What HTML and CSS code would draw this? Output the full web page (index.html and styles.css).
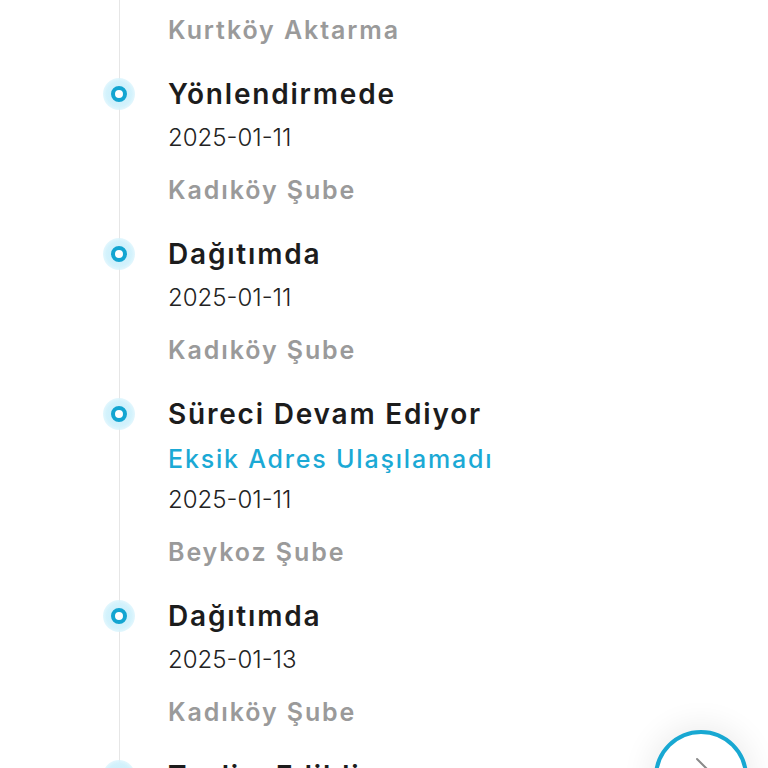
FILE: index.html
```html
<!DOCTYPE html>
<html>
<head>
  <title>Gönderi Hareketleri</title>
  <link rel="stylesheet" href="styles.css">
</head>
<body>
  <div class="timeline">
    <div class="event event-partial">
      <div class="branch">Kurtköy Aktarma</div>
    </div>

    <div class="event">
      <span class="dot"></span>
      <div class="title">Yönlendirmede</div>
      <div class="date">2025-01-11</div>
      <div class="branch">Kadıköy Şube</div>
    </div>

    <div class="event">
      <span class="dot"></span>
      <div class="title">Dağıtımda</div>
      <div class="date">2025-01-11</div>
      <div class="branch">Kadıköy Şube</div>
    </div>

    <div class="event">
      <span class="dot"></span>
      <div class="title">Süreci Devam Ediyor</div>
      <div class="note">Eksik Adres Ulaşılamadı</div>
      <div class="date">2025-01-11</div>
      <div class="branch">Beykoz Şube</div>
    </div>

    <div class="event">
      <span class="dot"></span>
      <div class="title">Dağıtımda</div>
      <div class="date">2025-01-13</div>
      <div class="branch">Kadıköy Şube</div>
    </div>

    <div class="event">
      <span class="dot"></span>
      <div class="title">Teslim Edildi</div>
      <div class="date">2025-01-14</div>
      <div class="branch">Kadıköy Şube</div>
    </div>
  </div>

  <button class="next-button" aria-label="Sonraki">
    <svg width="30" height="30" viewBox="0 0 30 30">
      <path d="M10 5 L20 15 L10 25" fill="none" stroke="#8a8a8a" stroke-width="2" stroke-linecap="round" stroke-linejoin="round"/>
    </svg>
  </button>
</body>
</html>
```

FILE: styles.css
```css
html, body {
  height: 100%;
  overflow: hidden;
}

body {
  margin: 0;
  background: #fff;
  font-family: Inter, "Open Sans", sans-serif;
  color: #1e1e1e;
}

.timeline {
  position: relative;
  padding: 2px 0 0 168px;
}

/* vertical line behind the dots */
.timeline::before {
  content: "";
  position: absolute;
  left: 119px;
  top: 0;
  bottom: 0;
  width: 1px;
  background: #e6e6e6;
}

.event {
  position: relative;
  margin-bottom: 16px;
}

.dot {
  position: absolute;
  left: -65px;
  top: 4px;
  width: 32px;
  height: 32px;
  border-radius: 50%;
  background: radial-gradient(circle, #c9eefb 0%, #d3f2fc 55%, rgba(220, 245, 253, 0.6) 78%, rgba(255, 255, 255, 0) 100%);
  display: flex;
  align-items: center;
  justify-content: center;
}

.dot::after {
  content: "";
  width: 8px;
  height: 8px;
  border-radius: 50%;
  border: 4px solid #13a5d1;
  background: #fff;
}

.title {
  font-size: 28px;
  font-weight: 600;
  letter-spacing: 1.8px;
  line-height: 40px;
  color: #1c1c1c;
}

.note {
  margin-top: 8px;
  font-size: 25px;
  font-weight: 500;
  letter-spacing: 1.8px;
  line-height: 34px;
  color: #1ba9d5;
}

.date {
  font-size: 24px;
  font-weight: 300;
  line-height: 48px;
  color: #222;
}

.branch {
  font-size: 25px;
  font-weight: 600;
  letter-spacing: 1.9px;
  line-height: 56px;
  color: #9a9a9a;
}

.next-button {
  position: fixed;
  right: 20px;
  bottom: -56px;
  width: 94px;
  height: 94px;
  border-radius: 50%;
  border: 4px solid #18a8d2;
  background: #fff;
  box-shadow: 0 0 30px 6px rgba(0, 0, 0, 0.07);
  display: flex;
  align-items: flex-start;
  justify-content: center;
  padding: 20px 0 0 2px;
  cursor: pointer;
}
```
